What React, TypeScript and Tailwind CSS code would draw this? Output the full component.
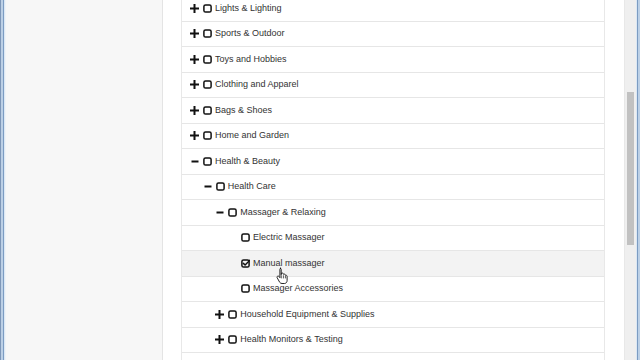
// Category tree — checkbox tree inside a scrolled browser window

type Node = {
  label: string;
  level: 0 | 1 | 2 | 3;
  toggle?: 'plus' | 'minus';
  checked?: boolean;
  active?: boolean;
};

const rows: Node[] = [
  { label: 'Lights & Lighting', level: 0, toggle: 'plus' },
  { label: 'Sports & Outdoor', level: 0, toggle: 'plus' },
  { label: 'Toys and Hobbies', level: 0, toggle: 'plus' },
  { label: 'Clothing and Apparel', level: 0, toggle: 'plus' },
  { label: 'Bags & Shoes', level: 0, toggle: 'plus' },
  { label: 'Home and Garden', level: 0, toggle: 'plus' },
  { label: 'Health & Beauty', level: 0, toggle: 'minus' },
  { label: 'Health Care', level: 1, toggle: 'minus' },
  { label: 'Massager & Relaxing', level: 2, toggle: 'minus' },
  { label: 'Electric Massager', level: 3 },
  { label: 'Manual massager', level: 3, checked: true, active: true },
  { label: 'Massager Accessories', level: 3 },
  { label: 'Household Equipment & Supplies', level: 2, toggle: 'plus' },
  { label: 'Health Monitors & Testing', level: 2, toggle: 'plus' },
];

const indent = ['pl-[8px]', 'pl-[20.67px]', 'pl-[33.33px]', 'pl-[46px]'];

function Toggle({ kind }: { kind?: 'plus' | 'minus' }) {
  return (
    <span className="w-[9px] h-[9px] flex items-center justify-center flex-shrink-0">
      {kind && (
        <svg width="9" height="9" viewBox="0 0 9 9">
          {kind === 'plus' ? (
            <>
              <rect x="0" y="3.5" width="9" height="2" fill="#111" />
              <rect x="3.5" y="0" width="2" height="9" fill="#111" />
            </>
          ) : (
            <rect x="1.5" y="3.5" width="7" height="2" fill="#111" />
          )}
        </svg>
      )}
    </span>
  );
}

function Box({ checked }: { checked?: boolean }) {
  return (
    <svg width="9" height="9" viewBox="0 0 9 9" className="flex-shrink-0">
      <rect x="0.9" y="0.9" width="7.2" height="7.2" rx="1.6" fill="none" stroke="#111" strokeWidth="1.5" />
      {checked && (
        <path d="M2.4 4.4 L4.1 6 L8.6 1.4" fill="none" stroke="#111" strokeWidth="1.5" strokeLinecap="round" strokeLinejoin="round" />
      )}
    </svg>
  );
}

function HandCursor() {
  return (
    <svg width="13" height="17" viewBox="0 0 13 17" className="absolute left-[276px] top-[267px]">
      <path
        d="M4 1.2c.7 0 1.2.5 1.2 1.2v5.3l.2-1.4c.7-.5 1.6-.3 1.9.4l.1.6c.6-.5 1.6-.3 1.9.5l.1.5c.7-.3 1.6.1 1.7.9v4.4c0 1.5-1.1 2.9-2.6 2.9H6c-1 0-1.7-.4-2.3-1.2L1.3 11c-.5-.7-.3-1.5.3-1.8.6-.3 1.2 0 1.5.4l.8 1.1V2.4c0-.7.4-1.2 1.1-1.2z"
        fill="#fff"
        stroke="#111"
        strokeWidth="0.9"
        strokeLinejoin="round"
      />
      <path d="M5.3 8.2v3.2M7.4 8.3v3.1M9.4 8.8v2.6" stroke="#111" strokeWidth="0.7" />
    </svg>
  );
}

export default function App() {
  return (
    <div className="relative w-[640px] h-[360px] overflow-hidden flex bg-white font-['Liberation_Sans',Arial,sans-serif]">
      {/* left window frame */}
      <div className="flex h-full flex-shrink-0">
        <div className="w-px bg-[#7f98b9]" />
        <div className="w-[2px] bg-[#bcd0e6]" />
        <div className="w-px bg-[#7c9cc2]" />
        <div className="w-px bg-[#dce8f4]" />
        <div className="w-px bg-[#eef3f8]" />
      </div>

      {/* sidebar */}
      <div className="w-[157px] h-full bg-[#f7f7f7] border-r border-[#e4e4e4] flex-shrink-0" />

      {/* main */}
      <div className="w-[461px] h-full bg-white pl-[18px] pr-[19px] flex-shrink-0">
        <div className="-mt-[4px] border-x border-[#e8e8e8]">
          {rows.map((r) => (
            <div
              key={r.label}
              className={`h-[25.5px] flex items-center border-b border-[#e6e6e6] ${indent[r.level]} ${r.active ? 'bg-[#f3f3f3]' : 'bg-white'}`}
            >
              <Toggle kind={r.toggle} />
              <span className="ml-[4px]">
                <Box checked={r.checked} />
              </span>
              <span className="ml-[3px] text-[9px] leading-none text-[#333] whitespace-nowrap">{r.label}</span>
            </div>
          ))}
          {/* next row, only its top shows */}
          <div className="h-[25.5px] bg-white" />
        </div>
      </div>

      {/* scrollbar */}
      <div className="w-[12px] h-full bg-[#efefef] border-l border-[#e8e8e8] flex-shrink-0">
        <div className="mt-[92px] mx-[2px] h-[153px] bg-[#c1c1c1]" />
      </div>

      {/* right window frame */}
      <div className="flex h-full flex-1">
        <div className="w-px bg-[#dce8f4]" />
        <div className="w-px bg-[#7c9cc2]" />
        <div className="w-[2px] bg-[#bcd0e6]" />
      </div>

      <HandCursor />
    </div>
  );
}
